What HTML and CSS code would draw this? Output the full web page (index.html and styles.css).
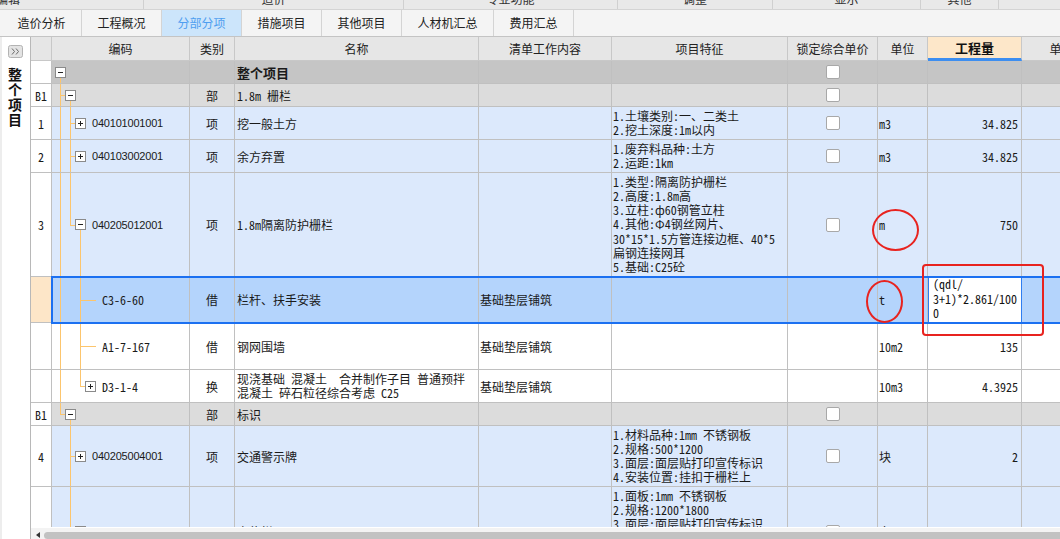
FILE: index.html
```html
<!DOCTYPE html>
<html lang="zh-CN">
<head>
<meta charset="utf-8">
<title>分部分项</title>
<link rel="stylesheet" href="styles.css">
</head>
<body>
<div class="app">
  <div class="ribbon">
    <div class="grp g1"><span>编辑</span></div>
    <div class="grp g2"><span>造价</span></div>
    <div class="grp g3"><span>专业功能</span></div>
    <div class="grp g4"><span>调整</span></div>
    <div class="grp g5"><span>显示</span></div>
    <div class="grp g6"><span>其他</span></div>
  </div>
  <div class="tabs">
    <div class="tab">造价分析</div>
    <div class="tab">工程概况</div>
    <div class="tab on">分部分项</div>
    <div class="tab">措施项目</div>
    <div class="tab">其他项目</div>
    <div class="tab">人材机汇总</div>
    <div class="tab">费用汇总</div>
  </div>
  <div class="main">
    <aside class="side">
      <svg class="expbtn" width="15" height="13" viewBox="0 0 15 13"><rect x="0.5" y="0.5" width="14" height="12" rx="2" fill="#e3e3e3" stroke="#b3b3b3"/><path d="M4 3.5l2.5 3-2.5 3M8 3.5l2.5 3-2.5 3" fill="none" stroke="#6a6a6a"/></svg>
      <div class="vtitle">整个项目</div>
    </aside>
    <div class="gridwrap">
      <div class="view">
        <div class="row hdr">
          <div class="c"></div>
          <div class="c">编码</div>
          <div class="c">类别</div>
          <div class="c">名称</div>
          <div class="c">清单工作内容</div>
          <div class="c">项目特征</div>
          <div class="c">锁定综合单价</div>
          <div class="c">单位</div>
          <div class="c qh">工程量</div>
          <div class="c">单价</div>
        </div>

        <div class="row rt h23">
          <div class="c num"></div>
          <div class="c code l0 t0"><svg class="exp" viewBox="0 0 11 11"><rect x="0.5" y="0.5" width="10" height="10" fill="#fff" stroke="#8a8a8a"/><path d="M3 5.5h5" stroke="#222"/></svg></div>
          <div class="c cat"></div>
          <div class="c name bold">整个项目</div>
          <div class="c list"></div>
          <div class="c feat"></div>
          <div class="c lock"><span class="chk"></span></div>
          <div class="c unit"></div>
          <div class="c qty"></div>
          <div class="c"></div>
        </div>

        <div class="row rb h23">
          <div class="c num">B1</div>
          <div class="c code l1 t1"><svg class="exp" viewBox="0 0 11 11"><rect x="0.5" y="0.5" width="10" height="10" fill="#fff" stroke="#8a8a8a"/><path d="M3 5.5h5" stroke="#222"/></svg></div>
          <div class="c cat">部</div>
          <div class="c name">1.8m 栅栏</div>
          <div class="c list"></div>
          <div class="c feat"></div>
          <div class="c lock"><span class="chk"></span></div>
          <div class="c unit"></div>
          <div class="c qty"></div>
          <div class="c"></div>
        </div>

        <div class="row rq h33">
          <div class="c num">1</div>
          <div class="c code l2 t2"><svg class="exp" viewBox="0 0 11 11"><rect x="0.5" y="0.5" width="10" height="10" fill="#fff" stroke="#8a8a8a"/><path d="M3 5.5h5M5.5 3v5" stroke="#222"/></svg><span class="sans">040101001001</span></div>
          <div class="c cat">项</div>
          <div class="c name">挖一般土方</div>
          <div class="c list"></div>
          <div class="c feat"><div>1.土壤类别:一、二类土<br>2.挖土深度:1m以内</div></div>
          <div class="c lock"><span class="chk"></span></div>
          <div class="c unit">m3</div>
          <div class="c qty">34.825</div>
          <div class="c"></div>
        </div>

        <div class="row rq h33">
          <div class="c num">2</div>
          <div class="c code l2 t2"><svg class="exp" viewBox="0 0 11 11"><rect x="0.5" y="0.5" width="10" height="10" fill="#fff" stroke="#8a8a8a"/><path d="M3 5.5h5M5.5 3v5" stroke="#222"/></svg><span class="sans">040103002001</span></div>
          <div class="c cat">项</div>
          <div class="c name">余方弃置</div>
          <div class="c list"></div>
          <div class="c feat"><div>1.废弃料品种:土方<br>2.运距:1km</div></div>
          <div class="c lock"><span class="chk"></span></div>
          <div class="c unit">m3</div>
          <div class="c qty">34.825</div>
          <div class="c"></div>
        </div>

        <div class="row rq h104">
          <div class="c num">3</div>
          <div class="c code l2 t2l"><svg class="exp" viewBox="0 0 11 11"><rect x="0.5" y="0.5" width="10" height="10" fill="#fff" stroke="#8a8a8a"/><path d="M3 5.5h5" stroke="#222"/></svg><span class="sans">040205012001</span></div>
          <div class="c cat">项</div>
          <div class="c name">1.8m隔离防护栅栏</div>
          <div class="c list"></div>
          <div class="c feat"><div>1.类型:隔离防护栅栏<br>2.高度:1.8m高<br>3.立柱:ф60钢管立柱<br>4.其他:Φ4钢丝网片、<br>30*15*1.5方管连接边框、40*5<br>扁钢连接网耳<br>5.基础:C25砼</div></div>
          <div class="c lock"><span class="chk"></span></div>
          <div class="c unit">m</div>
          <div class="c qty">750</div>
          <div class="c"></div>
        </div>

        <div class="row rs h46">
          <div class="c num"></div>
          <div class="c code ln t3">C3-6-60</div>
          <div class="c cat">借</div>
          <div class="c name">栏杆、扶手安装</div>
          <div class="c list">基础垫层铺筑</div>
          <div class="c feat"></div>
          <div class="c lock"></div>
          <div class="c unit">t</div>
          <div class="c edit">(qdl/<br>3+1)*2.861/100<br>0</div>
          <div class="c"></div>
        </div>

        <div class="row rw h47">
          <div class="c num"></div>
          <div class="c code ln t3">A1-7-167</div>
          <div class="c cat">借</div>
          <div class="c name">钢网围墙</div>
          <div class="c list">基础垫层铺筑</div>
          <div class="c feat"></div>
          <div class="c lock"></div>
          <div class="c unit">10m2</div>
          <div class="c qty">135</div>
          <div class="c"></div>
        </div>

        <div class="row rw h33">
          <div class="c num"></div>
          <div class="c code l3 t3l"><svg class="exp" viewBox="0 0 11 11"><rect x="0.5" y="0.5" width="10" height="10" fill="#fff" stroke="#8a8a8a"/><path d="M3 5.5h5M5.5 3v5" stroke="#222"/></svg><span>D3-1-4</span></div>
          <div class="c cat">换</div>
          <div class="c name pre"><div>现浇基础 混凝土  合并制作子目 普通预拌<br>混凝土 碎石粒径综合考虑 C25</div></div>
          <div class="c list">基础垫层铺筑</div>
          <div class="c feat"></div>
          <div class="c lock"></div>
          <div class="c unit">10m3</div>
          <div class="c qty">4.3925</div>
          <div class="c"></div>
        </div>

        <div class="row rb h23">
          <div class="c num">B1</div>
          <div class="c code l1 t1l"><svg class="exp" viewBox="0 0 11 11"><rect x="0.5" y="0.5" width="10" height="10" fill="#fff" stroke="#8a8a8a"/><path d="M3 5.5h5" stroke="#222"/></svg></div>
          <div class="c cat">部</div>
          <div class="c name">标识</div>
          <div class="c list"></div>
          <div class="c feat"></div>
          <div class="c lock"><span class="chk"></span></div>
          <div class="c unit"></div>
          <div class="c qty"></div>
          <div class="c"></div>
        </div>

        <div class="row rq h61">
          <div class="c num">4</div>
          <div class="c code l2 t2b"><svg class="exp" viewBox="0 0 11 11"><rect x="0.5" y="0.5" width="10" height="10" fill="#fff" stroke="#8a8a8a"/><path d="M3 5.5h5M5.5 3v5" stroke="#222"/></svg><span class="sans">040205004001</span></div>
          <div class="c cat">项</div>
          <div class="c name">交通警示牌</div>
          <div class="c list"></div>
          <div class="c feat"><div>1.材料品种:1mm 不锈钢板<br>2.规格:500*1200<br>3.面层:面层贴打印宣传标识<br>4.安装位置:挂扣于栅栏上</div></div>
          <div class="c lock"><span class="chk"></span></div>
          <div class="c unit">块</div>
          <div class="c qty">2</div>
          <div class="c"></div>
        </div>

        <div class="row rq h90">
          <div class="c num">5</div>
          <div class="c code l2 t2b"><svg class="exp" viewBox="0 0 11 11"><rect x="0.5" y="0.5" width="10" height="10" fill="#fff" stroke="#8a8a8a"/><path d="M3 5.5h5M5.5 3v5" stroke="#222"/></svg><span class="sans">040205004002</span></div>
          <div class="c cat">项</div>
          <div class="c name">宣传栏</div>
          <div class="c list"></div>
          <div class="c feat"><div>1.面板:1mm 不锈钢板<br>2.规格:1200*1800<br>3.面层:面层贴打印宣传标识<br>4.立柱:ф60钢管立柱<br>5.基础:C25砼<br>6.安装位置:详见设计</div></div>
          <div class="c lock"><span class="chk"></span></div>
          <div class="c unit">套</div>
          <div class="c qty">1</div>
          <div class="c"></div>
        </div>
      </div>
      <div class="hscroll">
        <div class="harrow"><svg width="4" height="6" viewBox="0 0 4 6"><path d="M4 0L0 3l4 3z" fill="#333"/></svg></div>
        <div class="thumb"></div>
      </div>
    </div>
  </div>
</div>
<div class="mark e1"></div>
<div class="mark e2"></div>
<div class="mark box"></div>
</body>
</html>
```

FILE: styles.css
```css
* { box-sizing: border-box; }
html, body { margin: 0; padding: 0; }
body {
  width: 1060px;
  height: 539px;
  overflow: hidden;
  position: relative;
  background: #fff;
  font-family: "Noto Sans CJK SC", "Noto Sans", sans-serif;
  font-size: 12px;
  color: #1a1a1a;
  --tl: #fcc56d;
}
.app { display: flex; flex-direction: column; height: 539px; }

/* ribbon group labels (clipped) */
.ribbon { height: 9px; flex: none; display: flex; background: #e9e9e9; overflow: hidden; }
.grp { border-right: 1px solid #d0d0d0; text-align: center; font-size: 12px; line-height: 12px; color: #333; flex: none; }
.grp span { display: block; margin-top: -7px; }
.g1 { width: 144px; text-align: left; }
.g1 span { margin-left: -4px; }
.g2 { width: 260px; }
.g3 { width: 214px; }
.g4 { width: 155px; }
.g5 { width: 148px; }
.g6 { width: 78px; }

/* tabs */
.tabs { height: 28px; flex: none; display: flex; background: #f4f4f4; border-top: 1px solid #d4d4d4; border-bottom: 1px solid #c4c4c4; }
.tab { padding: 0 15.5px; border-right: 1px solid #d4d4d4; line-height: 26px; font-size: 12px; color: #222; }
.tab:first-child { padding-left: 17.5px; }
.tab.on { background: #cce5fb; color: #4f9ef0; }

/* main */
.main { flex: 1; display: flex; min-height: 0; }
.side { width: 30px; flex: none; display: flex; flex-direction: column; align-items: center; padding-top: 8px; gap: 10px; background: #fff; border-left: 2px solid #ededed; }
.expbtn { display: block; margin-left: -2px; }
.vtitle { writing-mode: vertical-rl; text-orientation: upright; font-weight: bold; font-size: 14px; letter-spacing: 1px; color: #111; margin-left: -2px; }

.gridwrap { flex: 1; min-width: 0; display: flex; flex-direction: column; border-left: 1px solid #b8b8b8; }
.view { flex: 1; min-height: 0; overflow: hidden; }

.row { display: grid; grid-template-columns: 21px 138px 45px 244px 133px 176px 90px 50px 94px 80px; width: 1071px; }
.c { border-right: 1px solid #c0c0c0; border-bottom: 1px solid #c0c0c0; display: flex; align-items: center; overflow: hidden; white-space: nowrap; }

.hdr { height: 24px; }
.hdr .c { background: #e6e6e6; justify-content: center; font-size: 12px; color: #222; border-color: #c8c8c8; }
.hdr .c.qh { background: #fde7c9; font-weight: bold; font-size: 13px; color: #111; border-bottom: 3px solid #3d8ef0; }

.row:not(.hdr) .c { font-family: "Noto Sans Mono CJK SC", "Noto Sans CJK SC", monospace; font-size: 12px; }
.h23 { height: 23px; }
.h33 { height: 33px; }
.h46 { height: 46px; }
.h47 { height: 47px; }
.h61 { height: 61px; }
.h90 { height: 90px; }
.h104 { height: 104px; }

.rt .c { background-color: #c5c5c5; }
.rb .c { background-color: #dcdcdc; }
.rq .c { background-color: #dce9fc; }
.rs .c { background-color: #b4d4fc; }
.rw .c { background-color: #fff; }
.row .c.num { background-color: #fff; justify-content: center; }
.rs .c.num { background-color: #fde6c8; }

.name { padding-left: 2px; }
.name.bold { font-weight: bold; font-size: 13px !important; }
.list { padding-left: 1px; }
.feat { padding-left: 1px; line-height: 14.2px; }
.pre div { white-space: pre; line-height: 14.2px; }
.cat { justify-content: center; }
.lock { justify-content: center; }
.unit { padding-left: 1px; }
.qty { justify-content: flex-end; padding-right: 3px; }
.chk { width: 14px; height: 14px; border: 1px solid #a8a8a8; border-radius: 2px; background: #fff; }

/* tree */
.code { gap: 6px; background-repeat: no-repeat; background-origin: border-box; }
.code .sans { font-family: "Liberation Sans", Arial, sans-serif; font-size: 11px; letter-spacing: -0.2px; color: #1a1a1a; }
.exp { width: 11px; height: 11px; flex: none; display: block; }
.l0 { padding-left: 3px; }
.l1 { padding-left: 13px; }
.l2 { padding-left: 23px; }
.l3 { padding-left: 33px; }
.ln { padding-left: 50px; }

.t0 {
  background-image: linear-gradient(var(--tl), var(--tl));
  background-size: 1px 50%;
  background-position: 8px 100%;
}
.t1 {
  background-image: linear-gradient(var(--tl), var(--tl)), linear-gradient(var(--tl), var(--tl)), linear-gradient(var(--tl), var(--tl));
  background-size: 1px 100%, 5px 1px, 1px 50%;
  background-position: 8px 0, 8px 50%, 18px 100%;
}
.t2 {
  background-image: linear-gradient(var(--tl), var(--tl)), linear-gradient(var(--tl), var(--tl)), linear-gradient(var(--tl), var(--tl));
  background-size: 1px 100%, 1px 100%, 5px 1px;
  background-position: 8px 0, 18px 0, 18px 50%;
}
.t2l {
  background-image: linear-gradient(var(--tl), var(--tl)), linear-gradient(var(--tl), var(--tl)), linear-gradient(var(--tl), var(--tl)), linear-gradient(var(--tl), var(--tl));
  background-size: 1px 100%, 1px 50%, 5px 1px, 1px 50%;
  background-position: 8px 0, 18px 0, 18px 50%, 28px 100%;
}
.t3 {
  background-image: linear-gradient(var(--tl), var(--tl)), linear-gradient(var(--tl), var(--tl)), linear-gradient(var(--tl), var(--tl));
  background-size: 1px 100%, 1px 100%, 16px 1px;
  background-position: 8px 0, 28px 0, 28px 50%;
}
.t3l {
  background-image: linear-gradient(var(--tl), var(--tl)), linear-gradient(var(--tl), var(--tl)), linear-gradient(var(--tl), var(--tl));
  background-size: 1px 100%, 1px 50%, 5px 1px;
  background-position: 8px 0, 28px 0, 28px 50%;
}
.t1l {
  background-image: linear-gradient(var(--tl), var(--tl)), linear-gradient(var(--tl), var(--tl)), linear-gradient(var(--tl), var(--tl));
  background-size: 1px 50%, 5px 1px, 1px 50%;
  background-position: 8px 0, 8px 50%, 18px 100%;
}
.t2b {
  background-image: linear-gradient(var(--tl), var(--tl)), linear-gradient(var(--tl), var(--tl));
  background-size: 1px 100%, 5px 1px;
  background-position: 18px 0, 18px 50%;
}

/* selected row */
.rs { position: relative; }
.rs::after { content: ""; position: absolute; left: 20px; top: -1px; bottom: -1px; right: 0; border: 2px solid #1b70f1; border-right: none; pointer-events: none; }
.rs .c.edit { background-color: #fff; border-left: 1px solid #2f7df0; border-right: 1px solid #2f7df0; display: block; padding: 0 2px 0 4px; line-height: 14.5px; color: #111; }

/* horizontal scrollbar */
.hscroll { height: 12px; flex: none; display: flex; background: #f3f3f3; padding-top: 4px; border-top: 1px solid #fff; }
.harrow { width: 13px; flex: none; display: flex; align-items: center; justify-content: center; padding-bottom: 1px; }
.harrow svg { display: block; }
.thumb { flex: 1; background: #c2c2c2; border-radius: 4px 0 0 4px; }

/* red annotations */
.mark { position: absolute; border: 2.5px solid #e8231f; pointer-events: none; }
.e1 { left: 872px; top: 209px; width: 47px; height: 42px; border-radius: 50%; }
.e2 { left: 866px; top: 280px; width: 37px; height: 43px; border-radius: 50%; }
.box { left: 922px; top: 264px; width: 122px; height: 72px; border-radius: 4px; }
```
